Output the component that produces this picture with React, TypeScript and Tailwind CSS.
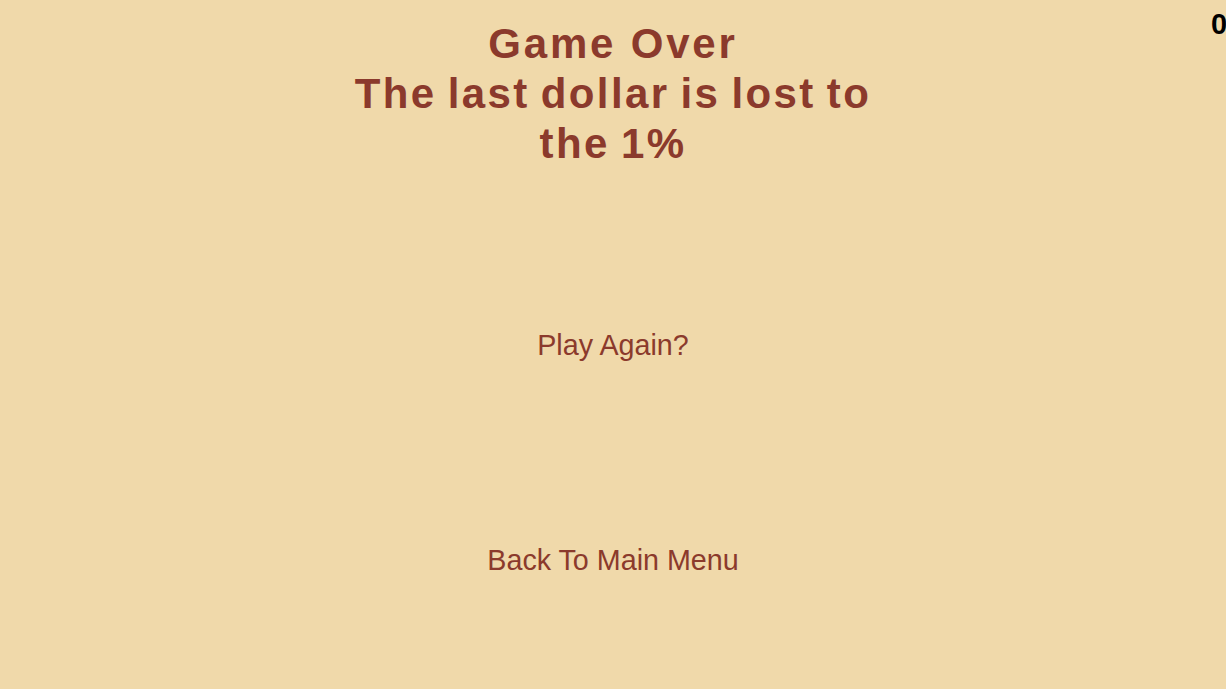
import React from "react";

export default function App() {
  return (
    <div
      className="relative w-full h-[689px] overflow-hidden bg-[#f0d9aa] flex flex-col items-center"
      style={{ fontFamily: '"Liberation Sans", Arial, sans-serif' }}
    >
      <h1 className="mt-[19px] w-[560px] text-center font-bold text-[42px] leading-[50px] text-[#8b3a2c]">
        <span className="block tracking-[2.8px]">Game Over</span>
        <span className="block tracking-[2.4px] [word-spacing:-3px]">
          The last dollar is lost to the 1%
        </span>
      </h1>
      <button className="mt-[160px] text-[28.7px] leading-[33px] text-[#8b3a2c] cursor-pointer">
        Play Again?
      </button>
      <button className="mt-[182px] text-[28.7px] leading-[33px] text-[#8b3a2c] cursor-pointer">
        Back To Main Menu
      </button>
      <div className="absolute top-[6px] left-[1211px] font-bold text-[29px] leading-[36px] text-black">
        0
      </div>
    </div>
  );
}
